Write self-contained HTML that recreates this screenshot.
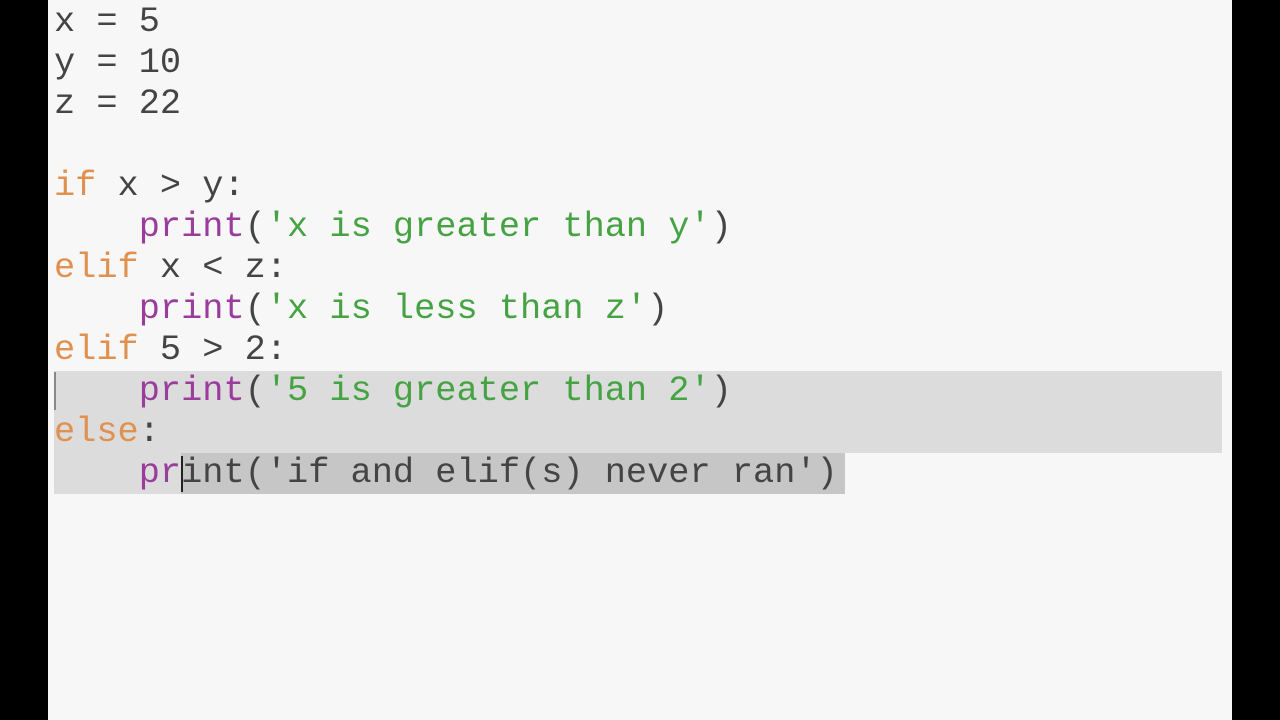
<!DOCTYPE html>
<html><head><style>
body{margin:0;width:1280px;height:720px;background:#000;overflow:hidden}
#ed{position:absolute;left:48px;top:0;width:1184px;height:720px;background:#f7f7f7}
.l{position:absolute;left:6px;height:41px;line-height:41px;font-family:"Liberation Mono",monospace;font-size:35.3px;color:#444;white-space:pre;margin-top:2px}
.k{color:#e0904f}.p{color:#9a3c9c}.s{color:#45a343}
.sel{position:absolute;background:#dcdcdc}
</style></head><body>
<div id="ed">
<div class="sel" style="left:6px;top:371px;width:1168px;height:82px"></div>
<div class="sel" style="left:6px;top:453px;width:127px;height:41px"></div>
<div class="sel" style="left:133px;top:453px;width:664px;height:41px;background:#c6c6c6"></div>
<div style="position:absolute;left:6px;top:372px;width:2px;height:38px;background:#888"></div>
<div style="position:absolute;left:133px;top:456px;width:2px;height:36px;background:#222"></div>
<div class="l" style="top:0">x = 5</div>
<div class="l" style="top:41px">y = 10</div>
<div class="l" style="top:82px">z = 22</div>
<div class="l" style="top:164px"><span class="k">if</span> x &gt; y:</div>
<div class="l" style="top:205px">    <span class="p">print</span>(<span class="s">'x is greater than y'</span>)</div>
<div class="l" style="top:246px"><span class="k">elif</span> x &lt; z:</div>
<div class="l" style="top:287px">    <span class="p">print</span>(<span class="s">'x is less than z'</span>)</div>
<div class="l" style="top:328px"><span class="k">elif</span> 5 &gt; 2:</div>
<div class="l" style="top:369px">    <span class="p">print</span>(<span class="s">'5 is greater than 2'</span>)</div>
<div class="l" style="top:410px"><span class="k">else</span>:</div>
<div class="l" style="top:451px">    <span class="p">pr</span>int('if and elif(s) never ran')</div>
</div>
</body></html>
